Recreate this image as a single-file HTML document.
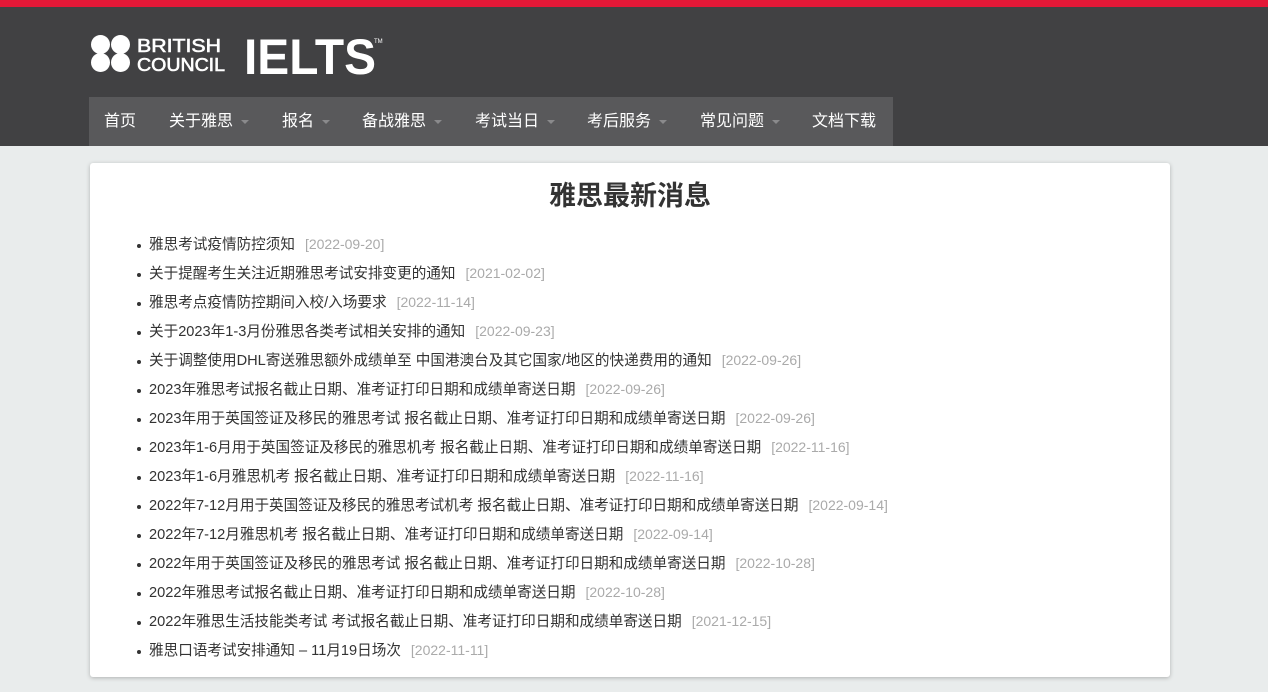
<!DOCTYPE html>
<html><head><meta charset="utf-8"><style>
*{margin:0;padding:0;box-sizing:border-box}
body{width:1268px;height:692px;overflow:hidden;background:#e9ecec;font-family:"Liberation Sans","Noto Sans CJK SC",sans-serif}
.red{height:7px;background:#e31837}
.hd{height:139px;background:#414143;position:relative}
.logo{position:absolute;left:91px;top:24px}
.nav{position:absolute;left:89px;top:90px;width:804px;height:49px;background:#59595b}
.nav span{position:absolute;top:15px;color:#fff;font-size:16px;line-height:20px;white-space:nowrap}
.nav i{display:inline-block;width:0;height:0;border-left:4px solid transparent;border-right:4px solid transparent;border-top:4px solid #8a8a8c;margin-left:8px;vertical-align:middle}
.card{position:absolute;left:90px;top:163px;width:1080px;height:514px;background:#fff;border-radius:3px;box-shadow:0 1px 4px rgba(0,0,0,.25)}
h1{text-align:center;font-size:27px;color:#333;margin-top:15px;line-height:36px;font-weight:bold}
ul{position:absolute;left:59px;top:68px;list-style:none}
li{font-size:14.6px;line-height:29px;height:29px;color:#333;position:relative;white-space:nowrap}
li:before{content:"";position:absolute;left:-12px;top:13px;width:4px;height:4px;border-radius:2px;background:#333}
li em{font-style:normal;color:#aaa;margin-left:10px;font-size:14px;line-height:1}
</style></head><body>
<div class="red"></div>
<div class="hd">
<div class="logo">
<svg width="300" height="50" viewBox="0 0 300 50">
<g fill="#fff"><circle cx="9.5" cy="13.5" r="9.5"/><circle cx="29.5" cy="13.5" r="9.5"/><circle cx="9.5" cy="31.5" r="9.5"/><circle cx="29.5" cy="31.5" r="9.5"/></g>
<text x="46" y="21" fill="#fff" stroke="#fff" stroke-width="0.6" font-family="Liberation Sans" font-size="18" textLength="84" lengthAdjust="spacingAndGlyphs">BRITISH</text>
<text x="46" y="40" fill="#fff" stroke="#fff" stroke-width="0.6" font-family="Liberation Sans" font-size="18" textLength="88" lengthAdjust="spacingAndGlyphs">COUNCIL</text>
<text x="153" y="43" fill="#fff" font-family="Liberation Sans" font-size="50" font-weight="bold" textLength="132" lengthAdjust="spacingAndGlyphs">IELTS</text>
<text x="283" y="12" fill="#fff" font-family="Liberation Sans" font-size="6">TM</text>
</svg>
</div>
<div class="nav">
<span style="left:15px">首页</span>
<span style="left:80px">关于雅思<i></i></span>
<span style="left:193px">报名<i></i></span>
<span style="left:273px">备战雅思<i></i></span>
<span style="left:386px">考试当日<i></i></span>
<span style="left:498px">考后服务<i></i></span>
<span style="left:611px">常见问题<i></i></span>
<span style="left:723px">文档下载</span>
</div>
</div>
<div class="card">
<h1>雅思最新消息</h1>
<ul>
<li>雅思考试疫情防控须知<em>[2022-09-20]</em></li>
<li>关于提醒考生关注近期雅思考试安排变更的通知<em>[2021-02-02]</em></li>
<li>雅思考点疫情防控期间入校/入场要求<em>[2022-11-14]</em></li>
<li>关于2023年1-3月份雅思各类考试相关安排的通知<em>[2022-09-23]</em></li>
<li>关于调整使用DHL寄送雅思额外成绩单至 中国港澳台及其它国家/地区的快递费用的通知<em>[2022-09-26]</em></li>
<li>2023年雅思考试报名截止日期、准考证打印日期和成绩单寄送日期<em>[2022-09-26]</em></li>
<li>2023年用于英国签证及移民的雅思考试 报名截止日期、准考证打印日期和成绩单寄送日期<em>[2022-09-26]</em></li>
<li>2023年1-6月用于英国签证及移民的雅思机考 报名截止日期、准考证打印日期和成绩单寄送日期<em>[2022-11-16]</em></li>
<li>2023年1-6月雅思机考 报名截止日期、准考证打印日期和成绩单寄送日期<em>[2022-11-16]</em></li>
<li>2022年7-12月用于英国签证及移民的雅思考试机考 报名截止日期、准考证打印日期和成绩单寄送日期<em>[2022-09-14]</em></li>
<li>2022年7-12月雅思机考 报名截止日期、准考证打印日期和成绩单寄送日期<em>[2022-09-14]</em></li>
<li>2022年用于英国签证及移民的雅思考试 报名截止日期、准考证打印日期和成绩单寄送日期<em>[2022-10-28]</em></li>
<li>2022年雅思考试报名截止日期、准考证打印日期和成绩单寄送日期<em>[2022-10-28]</em></li>
<li>2022年雅思生活技能类考试 考试报名截止日期、准考证打印日期和成绩单寄送日期<em>[2021-12-15]</em></li>
<li>雅思口语考试安排通知 – 11月19日场次<em>[2022-11-11]</em></li>
</ul>
</div>
</body></html>
